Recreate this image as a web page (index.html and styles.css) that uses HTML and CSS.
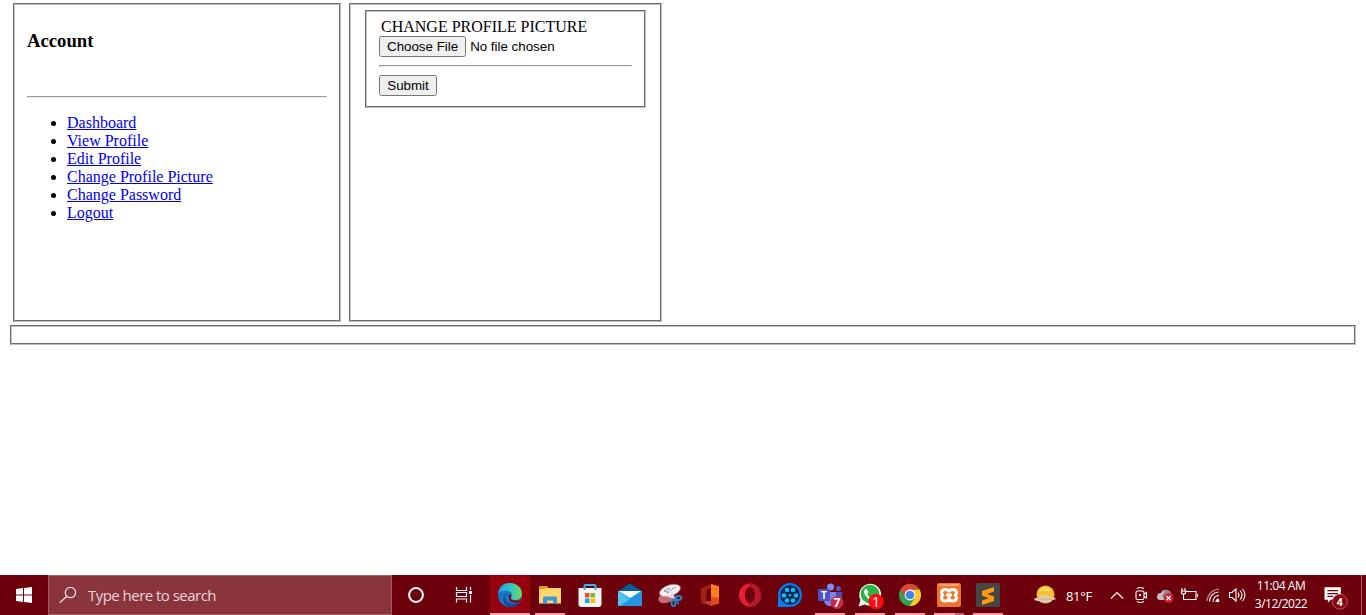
FILE: index.html
```html
<!DOCTYPE html>
<html lang="en">
<head>
<meta charset="utf-8">
<title>Change Profile Picture</title>
<link rel="stylesheet" href="styles.css">
</head>
<body>
<main class="page">
  <div class="columns">
    <section class="box account">
      <h3 class="title">Account</h3>
      <hr class="rule">
      <ul class="links">
        <li><a href="#">Dashboard</a></li>
        <li><a href="#">View Profile</a></li>
        <li><a href="#">Edit Profile</a></li>
        <li><a href="#">Change Profile Picture</a></li>
        <li><a href="#">Change Password</a></li>
        <li><a href="#">Logout</a></li>
      </ul>
    </section>
    <section class="box content">
      <form class="box picture">
        <div class="legend">CHANGE PROFILE PICTURE</div>
        <input class="file" type="file">
        <hr class="rule">
        <input class="submit" type="submit" value="Submit">
      </form>
    </section>
  </div>
  <footer class="box footer"></footer>
</main>
<nav class="taskbar">
  <svg class="wide" viewBox="0 0 48 40"><path fill="#fff" d="M16 14l7-1v6.500h-7zM24 12.900l8-1v7.600h-8zM16 20.500h7V27l-7-1zM24 20.500h8V28l-8-1z"/></svg>
  <div class="search">
    <svg class="glass" viewBox="0 0 40 40" fill="none" stroke="#f0dcde" stroke-width="1.300"><circle cx="22" cy="17.500" r="5.300"/><path d="M18 21.500l-7 6.500"/></svg>
    <span class="hint">Type here to search</span>
  </div>
  <svg class="wide" viewBox="0 0 48 40"><circle cx="24" cy="20" r="6.900" fill="none" stroke="#fff" stroke-width="2"/></svg>
  <svg class="wide" viewBox="0 0 48 40" fill="none" stroke="#fff" stroke-width="1.200"><path d="M16.500 12v3.500h10V12M16.500 27.500V24h10v3.500M16.500 17.500h10v4h-10zM30.500 12v3M30.500 20v7.500"/><path fill="#fff" stroke="none" d="M29 16h3v3h-3z"/></svg>
  <div class="apps">
    <div class="app active"><svg viewBox="0 0 40 40"><defs><linearGradient id="edgeTop"><stop stop-color="#249ee4"/><stop offset=".55" stop-color="#31c5c1"/><stop offset="1" stop-color="#70db55"/></linearGradient></defs><circle cx="20" cy="20" r="12" fill="#1574c4"/><path fill="url(#edgeTop)" d="M8 19C9 11 14 8 20 8c7 0 12 5 12 11 0 4-3 6-7 6-3 0-5-1-4-2 2-2 1-6-3-7-4-1-8 0-10 3z"/><path fill="#0c4e9c" d="M17 18c-4 4-1 10 5 11 4 .4 7-1 8.500-2.500C27 32 21 33 17.500 31.500 12 29 12 20 17 18z"/><path fill="#97000f" d="M19 20c1-1 2 0 2 1.500-1 2 1 4 4 4 3 .2 5-.8 6.500-2L30 26.500c-3 2.500-10 1.500-11-2.500z"/></svg></div>
    <div class="app open"><svg viewBox="0 0 40 40"><path fill="#dc9f13" d="M9 11h8l1.500 2H30v4H9z"/><path fill="#ffd667" d="M9 14.500l10-1.500h12v15.500H9z"/><path fill="#3b96dc" d="M13 29v-6q0-1.500 1.500-1.500h11q1.500 0 1.500 1.500v6h-4v-3.500h-6V29z"/></svg></div>
    <div class="app"><svg viewBox="0 0 40 40"><path fill="#f4f4f5" d="M8.500 13h23v16q0 3-3 3h-17q-3 0-3-3z"/><path fill="none" stroke="#35b6ee" stroke-width="2" d="M14.500 15v-4q0-1 1-1h9q1 0 1 1v4"/><path fill="#ee5024" d="M15 18h4.500v4.500H15z"/><path fill="#7fba22" d="M20.500 18H25v4.500h-4.500z"/><path fill="#18a0e8" d="M15 23.500h4.500V28H15z"/><path fill="#ffb900" d="M20.500 23.500H25V28h-4.500z"/></svg></div>
    <div class="app"><svg viewBox="0 0 40 40"><path fill="#075a9e" d="M8 16l12-7.500L32 16z"/><path fill="#2aa9ea" d="M8 16h24v15H8z"/><path fill="#50c4f3" d="M8 16l12 9-10 6H8z"/><path fill="#2395df" d="M32 16L10 31h22z"/><path fill="#fff" d="M9 16h22l-11 7z"/></svg></div>
    <div class="app"><svg viewBox="0 0 40 40"><ellipse cx="16" cy="23" rx="8" ry="5" fill="#c36c76" transform="rotate(-15 16 23)"/><ellipse cx="20" cy="15.500" rx="11" ry="5.500" fill="#f5f2f3" stroke="#dc5560" stroke-width=".6" transform="rotate(-18 20 15.500)"/><path fill="none" stroke="#9a969c" d="M20 13l-6 3 5 2M17 17l9-5"/><path stroke="#d9dfe7" stroke-width="2" d="M20 14l4 9M16 20l9 3"/><g fill="none" stroke="#2b86c6" stroke-width="1.800"><ellipse cx="28.500" cy="23" rx="3" ry="2"/><ellipse cx="23.500" cy="28" rx="2" ry="3"/><path d="M25.500 22l3 7"/></g></svg></div>
    <div class="app"><svg viewBox="0 0 40 40"><path fill="#a32114" d="M11 13.500L21 9v4l-4.500 2v11L11 28z"/><path fill="#df4a16" d="M21 9l8 2.500v17L21 31l-8-4 8-.5z"/><path fill="#ff7d21" d="M21 9l8 2.500V23l-8-1z"/><path fill="#6c000b" d="M16.500 15.500L21 13.500v13l-5.500.5 1-1z"/><path fill="#c43a2a" d="M11 28l5.500-2H21v4.500l-6-2z"/></svg></div>
    <div class="app"><svg viewBox="0 0 40 40"><path fill="#e91e35" fill-rule="evenodd" d="M20 8.500a11 11.500 0 100 23 11 11.500 0 000-23zm0 3.500c3.500 0 5 4 5 8s-1.500 8-5 8-5-4-5-8 1.500-8 5-8z"/><path fill="#b3182c" fill-rule="evenodd" d="M22 8.700C34 10 34 30 22 31.300 19 31 18 29 18 27.500c5 2.500 7-2 7-7.500s-2-10-7-7.500c1-2.500 2-3.500 4-3.800z"/></svg></div>
    <div class="app"><svg viewBox="0 0 40 40"><path fill="#087bed" d="M8 32V20a12 12 0 1112 12z"/><circle cx="20" cy="20" r="9.800" fill="#07254d"/><g fill="#19b8fb"><circle cx="17" cy="15" r="2.300"/><circle cx="23" cy="15" r="2.300"/><circle cx="26" cy="20.500" r="2.300"/><circle cx="14" cy="20.500" r="2.300"/><circle cx="17" cy="25.500" r="2.300"/><circle cx="23" cy="25.500" r="2.300"/><circle cx="20" cy="20.200" r="1.200"/></g></svg></div>
    <div class="app open"><svg viewBox="0 0 40 40"><circle cx="20.500" cy="12" r="3.500" fill="#858aed"/><circle cx="28.500" cy="13.500" r="2.500" fill="#4f58bd"/><path fill="#4851b8" d="M24 17h8v7c0 6-8 5-8 0z"/><path fill="#7b83eb" d="M14 17h12v8c0 8-12 8-12 0z"/><rect x="8" y="14" width="12" height="12" rx="1" fill="#4d55c0"/><text class="mark t" x="14" y="23.500">T</text><circle cx="27" cy="27.500" r="6.500" fill="#cc2946"/><text class="mark" x="27" y="32">7</text></svg></div>
    <div class="app open"><svg viewBox="0 0 40 40"><path fill="#f4faf5" d="M8.500 31.500l2-6.500a11 11 0 114.500 4.500z"/><circle cx="20" cy="19" r="9.300" fill="#2ab547"/><path fill="#fff" d="M16 13.500l2.500 3.500-1.300 2c1 2 2.500 3.500 4.500 4.500l2-1.500 3 2c-2 4-6 2-9-1-4-4-5-7-1.700-9.500z"/><circle cx="26" cy="26.500" r="7.700" fill="#ff0c10"/><text class="mark one" x="26" y="31.500">1</text></svg></div>
    <div class="app narrow open"><svg viewBox="0 0 40 40"><circle cx="20" cy="20" r="11" fill="#30a552"/><path fill="#ffca28" d="M20 14.500h9.500A11 11 0 0119.500 31l5.500-8z"/><path fill="#df4335" d="M10.500 14.500a11 11 0 0119 0H20l-5 8z"/><circle cx="20" cy="20" r="5.400" fill="#fff"/><circle cx="20" cy="20" r="4.300" fill="#3d82f0"/></svg></div>
    <div class="app narrow open stacked"><svg viewBox="0 0 40 40"><rect x="8" y="8" width="24" height="24" rx="2" fill="#ed7428"/><path fill="#f4a36e" d="M9 9h22l-2 2H11z"/><path fill="none" stroke="#fff" stroke-width="3" stroke-linejoin="round" d="M20 17.500q0-3-3.500-3-4 0-4 3.200 0 1.300 1.500 2.300-1.500 1-1.500 2.800 0 3.200 4 3.200 3.500 0 3.500-3 0 3 3.500 3 4 0 4-3.200 0-1.800-1.500-2.800 1.500-1 1.500-2.300 0-3.200-4-3.200-3.500 0-3.500 3M17 20h6"/></svg></div>
    <div class="app narrow open"><svg viewBox="0 0 40 40"><rect x="8" y="8" width="24" height="24" rx="1.500" fill="#454545"/><path fill="#ff9a0b" d="M14 16l12-4v4.500l-7 2.500 7 2.500v4.500l-12 4v-4.500l7-2.300-7-2.700z"/></svg></div>
  </div>
  <svg class="weather" viewBox="0 0 40 40"><circle cx="20.500" cy="19.500" r="9" fill="#fbbd2d"/><path fill="#ffd762" d="M13 16c3-5 11-5 14 0z"/><path fill="#dfc9af" d="M9 24q1-1.500 4-1.500 2-3.500 6-2 3-2 5 1 2-1 3 1 4-.5 4 1.500-3 1-5 1.500 2 1.500-4 2-7 .5-8-1.500-4 0-5-2z"/><path fill="none" stroke="#b68b66" stroke-width=".5" d="M14 24q3-1.500 6 .5 3-1 7 0"/></svg>
  <span class="temp">81°F</span>
  <div class="tray">
    <svg viewBox="0 0 24 40"><path d="M6 23.500l6-6 6 6"/></svg>
    <svg viewBox="0 0 24 40"><path d="M8 13.500q3-2 7 0M8 26.500q3 2 7 0"/><rect x="7" y="16" width="8" height="8.500" rx="1.500"/><path d="M15 19l2.500-1.500v5.500L15 21.500"/><circle cx="11" cy="20.200" r=".6"/></svg>
    <svg viewBox="0 0 24 40"><path fill="#c7bdc0" stroke="none" d="M4 22q0-4 4-4 2-4 6-3 4 1 4 4 2 1 2 6H7q-3 0-3-3z"/><path fill="#918389" stroke="none" d="M12 15q6 0 7 7H9z"/><circle cx="15.500" cy="23" r="4.800" fill="#d51c31" stroke="none"/><path stroke-width="1.400" d="M13.500 21l4 4m0-4l-4 4"/></svg>
    <svg viewBox="0 0 24 40"><path d="M5 13v3m3-3v3M4.500 16h4v2q-2 2-4 0zM6.500 19v5.500M8.500 16.500h10.500v8H6.500M20.500 19v3"/></svg>
    <svg viewBox="0 0 24 40"><path opacity=".6" d="M6 26a13 13 0 0112-12"/><path d="M8.500 26.500a9.500 9.500 0 019-9.500M12 27a6 6 0 016-6.500"/><circle cx="17" cy="26" r="1.300" fill="#fff" stroke="none"/><path d="M15 27q0-3 3-3"/></svg>
    <svg viewBox="0 0 24 40"><path d="M4.500 17.500H7l4-3.500v12l-4-3.500H4.500zM13 17.500q2 2.500 0 5M15 15.500q4 4.500 0 9M17.500 14q5 6 0 12"/></svg>
  </div>
  <div class="clock"><span>11:04 AM</span><span class="date">3/12/2022</span></div>
  <svg class="notices" viewBox="0 0 50 40"><path fill="#fff" d="M12 12h17v13H18.500l-3 3v-3H12z"/><path stroke="#70000b" stroke-width="1.200" d="M15 15.500h11M15 18.500h11M15 21.500h6"/><circle cx="28" cy="27" r="7.700" fill="#87000e" stroke="#b7626b"/><text class="mark four" x="28" y="31">4</text></svg>
</nav>
</body>
</html>
```
FILE: styles.css
```css
* { box-sizing: border-box; }
body {
  margin: 0;
  height: 615px;
  display: flex;
  flex-direction: column;
  overflow: hidden;
  background: #fff;
  color: #000;
  font: 16px/18px "Liberation Serif", "Times New Roman", serif;
}
.page { flex: 1; padding: 3px 10px 0; }
.columns { display: flex; gap: 8px; padding-left: 3px; }
.box { border: 2px groove #c0c0c0; }
.account { width: 328px; height: 319px; padding: 0 12px; }
.content { width: 313px; height: 319px; padding: 5px 14px; }
.title { margin: 25px 0 45px; font-size: 18.72px; line-height: 21px; }
.rule { margin: 0; border: 1px inset #eee; }
.links { margin: 16px 0 0; padding-left: 40px; }
.links a { color: #00e; text-decoration: underline; }
.picture {
  display: flex;
  flex-direction: column;
  align-items: flex-start;
  width: 281px;
  height: 98px;
  padding: 6px 12px 0;
}
.picture .rule { width: 253px; margin: 8px 0; }
.legend { padding-left: 2px; }
.file, .submit { font: 13.333px "Liberation Sans", Arial, sans-serif; }
.file { height: 21px; }
.submit { width: 58px; height: 21px; padding: 1px 6px; }
.footer { height: 20px; margin-top: 3px; }
.taskbar {
  display: flex;
  height: 40px;
  background: #6c000b;
  color: #fff;
  font: 12px/18px "Open Sans", "Noto Sans", sans-serif;
}
.taskbar svg { display: block; flex: none; height: 40px; }
.wide { width: 48px; }
.search {
  display: flex;
  align-items: center;
  width: 344px;
  background: #8a343d;
  border: 1px solid #a45d64;
}
.glass { width: 39px; }
.hint { color: #ead5d7; font-size: 15px; letter-spacing: -.53px; white-space: nowrap; }
.apps { display: flex; width: 517px; margin-left: 2px; }
.app { display: flex; justify-content: center; flex: none; width: 40px; height: 40px; }
.narrow { width: 39px; }
.app svg { width: 40px; }
.open { background: linear-gradient(#ff9ca4, #ff9ca4) 50% 100% / 30px 2px no-repeat; }
.active { background: linear-gradient(#ffa7ad, #ffa7ad) 0 100% / 100% 2px no-repeat #97000f; }
.stacked {
  background: linear-gradient(90deg, #ff9ca4 21px, #bd6974 21px) 50% 100% / 30px 2px no-repeat;
}
.weather { width: 40px; margin-left: 18px; }
.temp { width: 40px; padding: 12px 0 0 1px; font-size: 13px; letter-spacing: -.35px; }
.tray { display: flex; }
.tray svg { width: 24px; fill: none; stroke: #fff; stroke-width: 1.1; }
.clock {
  display: flex;
  flex-direction: column;
  align-items: center;
  width: 64px;
  padding-top: 2px;
  letter-spacing: -.45px;
  white-space: nowrap;
}
.date { letter-spacing: -.5px; }
.notices { width: 49px; border-right: 1px solid #a65a63; }
.mark { fill: #fff; font: bold 12px "Open Sans", sans-serif; text-anchor: middle; }
.t { font-size: 10px; }
.one { font-size: 14px; font-weight: normal; }
.four { font-size: 11px; }
```
